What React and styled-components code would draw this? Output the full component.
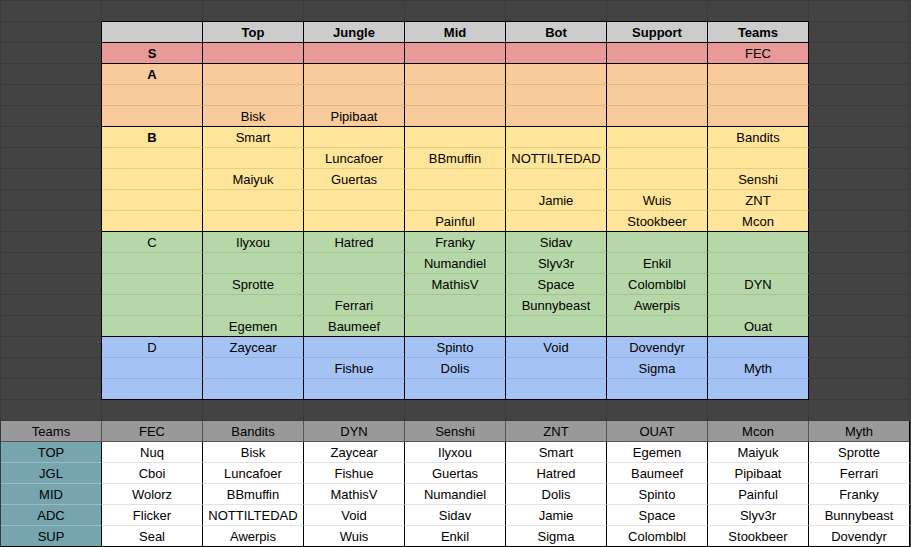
import React from 'react'
import styled, { createGlobalStyle } from 'styled-components'

const GlobalStyle = createGlobalStyle`
  html, body {
    margin: 0;
    padding: 0;
    background: #434343;
  }
  body {
    font-family: 'Liberation Sans', Arial, sans-serif;
    font-size: 13px;
    color: #000;
  }
`

const DARK_LINE = '#3a3a3a'
const BLACK = '#000'

const tiers = [
  {
    name: 'S',
    bold: true,
    bg: '#ea9999',
    line: '#d88a8a',
    rows: [['', '', '', '', '', 'FEC']],
  },
  {
    name: 'A',
    bold: true,
    bg: '#f9cb9c',
    line: '#e2b68b',
    rows: [
      ['', '', '', '', '', ''],
      ['', '', '', '', '', ''],
      ['Bisk', 'Pipibaat', '', '', '', ''],
    ],
  },
  {
    name: 'B',
    bold: true,
    bg: '#ffe599',
    line: '#e8cf88',
    rows: [
      ['Smart', '', '', '', '', 'Bandits'],
      ['', 'Luncafoer', 'BBmuffin', 'NOTTILTEDAD', '', ''],
      ['Maiyuk', 'Guertas', '', '', '', 'Senshi'],
      ['', '', '', 'Jamie', 'Wuis', 'ZNT'],
      ['', '', 'Painful', '', 'Stookbeer', 'Mcon'],
    ],
  },
  {
    name: 'C',
    bold: false,
    bg: '#b6d7a8',
    line: '#a3c296',
    rows: [
      ['Ilyxou', 'Hatred', 'Franky', 'Sidav', '', ''],
      ['', '', 'Numandiel', 'Slyv3r', 'Enkil', ''],
      ['Sprotte', '', 'MathisV', 'Space', 'Colomblbl', 'DYN'],
      ['', 'Ferrari', '', 'Bunnybeast', 'Awerpis', ''],
      ['Egemen', 'Baumeef', '', '', '', 'Ouat'],
    ],
  },
  {
    name: 'D',
    bold: false,
    bg: '#a4c2f4',
    line: '#93afdc',
    rows: [
      ['Zaycear', '', 'Spinto', 'Void', 'Dovendyr', ''],
      ['', 'Fishue', 'Dolis', '', 'Sigma', 'Myth'],
      ['', '', '', '', '', ''],
    ],
  },
]

const roles = ['Top', 'Jungle', 'Mid', 'Bot', 'Support', 'Teams']

const teams = ['FEC', 'Bandits', 'DYN', 'Senshi', 'ZNT', 'OUAT', 'Mcon', 'Myth']

const rosters = [
  ['TOP', 'Nuq', 'Bisk', 'Zaycear', 'Ilyxou', 'Smart', 'Egemen', 'Maiyuk', 'Sprotte'],
  ['JGL', 'Cboi', 'Luncafoer', 'Fishue', 'Guertas', 'Hatred', 'Baumeef', 'Pipibaat', 'Ferrari'],
  ['MID', 'Wolorz', 'BBmuffin', 'MathisV', 'Numandiel', 'Dolis', 'Spinto', 'Painful', 'Franky'],
  ['ADC', 'Flicker', 'NOTTILTEDAD', 'Void', 'Sidav', 'Jamie', 'Space', 'Slyv3r', 'Bunnybeast'],
  ['SUP', 'Seal', 'Awerpis', 'Wuis', 'Enkil', 'Sigma', 'Colomblbl', 'Stookbeer', 'Dovendyr'],
]

export default function App() {
  return (
    <>
      <GlobalStyle />
      <Sheet>
        {/* top empty row, black bottom over the tier table */}
        <Row>
          <DarkCell />
          {Array.from({ length: 7 }).map((_, i) => (
            <DarkCell key={i} $bottom={BLACK} />
          ))}
          <DarkCell />
        </Row>

        <Row>
          <DarkCell $right={BLACK} />
          <HeadCell />
          {roles.map((r) => (
            <HeadCell key={r}>{r}</HeadCell>
          ))}
          <DarkCell />
        </Row>

        {tiers.map((tier) =>
          tier.rows.map((row, ri) => {
            const last = ri === tier.rows.length - 1
            const bottom = last ? BLACK : tier.line
            return (
              <Row key={tier.name + ri}>
                <DarkCell $right={BLACK} />
                <TierCell $bg={tier.bg} $bottom={bottom} $bold={tier.bold}>
                  {ri === 0 ? tier.name : ''}
                </TierCell>
                {row.map((name, ci) => (
                  <TierCell key={ci} $bg={tier.bg} $bottom={bottom}>
                    {name}
                  </TierCell>
                ))}
                <DarkCell />
              </Row>
            )
          })
        )}

        {/* spacer row */}
        <Row>
          {Array.from({ length: 9 }).map((_, i) => (
            <DarkCell key={i} />
          ))}
        </Row>

        <Row>
          <TeamHead>Teams</TeamHead>
          {teams.map((t, i) => (
            <TeamHead key={t} $right={i === teams.length - 1 ? BLACK : '#555'}>
              {t}
            </TeamHead>
          ))}
        </Row>

        {rosters.map((row, ri) => {
          const last = ri === rosters.length - 1
          return (
            <Row key={row[0]}>
              <RoleCell $bottom={last ? BLACK : '#9bbcc3'}>{row[0]}</RoleCell>
              {row.slice(1).map((p, ci) => (
                <PlayerCell key={ci} $bottom={last ? BLACK : '#e2e2e2'}>
                  {p}
                </PlayerCell>
              ))}
            </Row>
          )
        })}
      </Sheet>
    </>
  )
}

const Sheet = styled.div`
  display: grid;
  grid-template-columns: repeat(9, 101px);
  grid-auto-rows: 21px;
  width: 909px;
  border-top: 1px solid ${DARK_LINE};
  border-left: 1px solid ${DARK_LINE};
  background: #434343;
`

const Row = styled.div`
  display: contents;
`

const Cell = styled.div`
  box-sizing: border-box;
  height: 21px;
  border-right: 1px solid ${(p) => p.$right || BLACK};
  border-bottom: 1px solid ${(p) => p.$bottom || BLACK};
  line-height: 22px;
  text-align: center;
  white-space: nowrap;
  overflow: hidden;
`

const DarkCell = styled(Cell)`
  background: #434343;
  border-right-color: ${(p) => p.$right || DARK_LINE};
  border-bottom-color: ${(p) => p.$bottom || DARK_LINE};
`

const HeadCell = styled(Cell)`
  background: #cccccc;
  font-weight: bold;
`

const TierCell = styled(Cell)`
  background: ${(p) => p.$bg};
  font-weight: ${(p) => (p.$bold ? 'bold' : 'normal')};
`

const TeamHead = styled(Cell)`
  background: #999999;
  border-right-color: ${(p) => p.$right || '#555'};
  border-bottom-color: #555;
`

const RoleCell = styled(Cell)`
  background: #76a5af;
`

const PlayerCell = styled(Cell)`
  background: #ffffff;
`
